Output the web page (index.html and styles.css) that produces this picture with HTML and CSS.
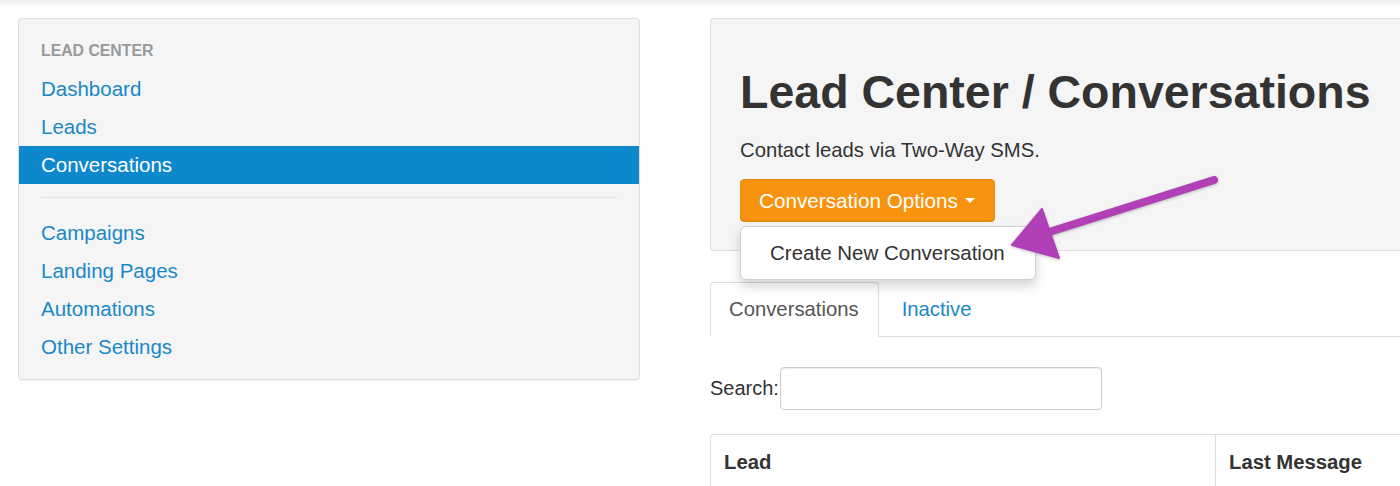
FILE: index.html
```html
<!DOCTYPE html>
<html lang="en">
<head>
<meta charset="utf-8">
<title>Lead Center / Conversations</title>
<link rel="stylesheet" href="styles.css">
</head>
<body>
<div class="topshade"></div>
<div class="page">
  <aside class="sidebar">
    <div class="side-title">LEAD CENTER</div>
    <ul class="side-nav">
      <li><a href="#">Dashboard</a></li>
      <li><a href="#">Leads</a></li>
      <li class="active"><a href="#">Conversations</a></li>
    </ul>
    <div class="side-divider"></div>
    <ul class="side-nav">
      <li><a href="#">Campaigns</a></li>
      <li><a href="#">Landing Pages</a></li>
      <li><a href="#">Automations</a></li>
      <li><a href="#">Other Settings</a></li>
    </ul>
  </aside>
  <main class="main">
    <section class="hero">
      <h1 class="hero-title">Lead Center / Conversations</h1>
      <p class="hero-sub">Contact leads via Two-Way SMS.</p>
      <div class="btn-group">
        <button class="btn-orange" type="button">Conversation Options<span class="caret"></span></button>
        <ul class="dropdown">
          <li><a href="#">Create New Conversation</a></li>
        </ul>
      </div>
    </section>
    <ul class="tabs">
      <li class="tab active"><a href="#">Conversations</a></li>
      <li class="tab"><a href="#">Inactive</a></li>
    </ul>
    <div class="search">
      <label for="q">Search:</label><input id="q" class="search-input" type="text">
    </div>
    <table class="table">
      <thead>
        <tr><th class="col-lead">Lead</th><th class="col-msg">Last Message</th></tr>
      </thead>
      <tbody>
        <tr><td></td><td></td></tr>
      </tbody>
    </table>
  </main>
</div>
<svg class="arrow" width="1400" height="486" viewBox="0 0 1400 486" aria-hidden="true">
  <g class="arrow-shape">
    <line x1="1214" y1="180" x2="1046" y2="233" stroke="#b13fb6" stroke-width="8" stroke-linecap="round"/>
    <polygon points="1012,245 1042,209 1059,258" fill="#b13fb6" stroke="#b13fb6" stroke-width="2" stroke-linejoin="round"/>
  </g>
</svg>
</body>
</html>
```
FILE: styles.css
```css
html, body {
  margin: 0;
  padding: 0;
  background: #ffffff;
  overflow: hidden;
  width: 1400px;
  height: 486px;
}
body {
  font-family: "Liberation Sans", Arial, Helvetica, sans-serif;
  color: #333333;
  position: relative;
}
.topshade {
  position: absolute;
  left: 0;
  top: 0;
  width: 1400px;
  height: 8px;
  background: linear-gradient(#eeeeee, rgba(255,255,255,0));
}
.page {
  display: flex;
  align-items: flex-start;
  padding: 18px 0 0 18px;
  gap: 70px;
  width: 1600px;
}
a { text-decoration: none; }
ul { list-style: none; margin: 0; padding: 0; }

/* Sidebar */
.sidebar {
  width: 620px;
  flex: 0 0 620px;
  background: #f5f5f5;
  border: 1px solid #dddddd;
  border-radius: 4px;
  padding: 21px 0 13px;
  box-shadow: 0 1px 1px rgba(0,0,0,0.04);
}
.side-title {
  font-size: 15.8px;
  font-weight: bold;
  line-height: 22px;
  color: #999999;
  padding: 0 22px;
  margin-bottom: 8px;
}
.side-nav li a {
  display: block;
  line-height: 38px;
  height: 38px;
  padding: 0 22px;
  font-size: 20.5px;
  color: #1a87c9;
}
.side-nav li.active a {
  background: #0e88cc;
  color: #ffffff;
}
.side-divider {
  height: 1px;
  background: #e3e3e3;
  margin: 13px 22px 16px;
}

/* Main */
.main {
  width: 760px;
  flex: 0 0 760px;
}
.hero {
  background: #f5f5f5;
  border: 1px solid #dddddd;
  border-right: none;
  border-radius: 4px 0 0 4px;
  padding: 48px 29px 28px;
}
.hero-title {
  margin: 0;
  font-size: 46.5px;
  line-height: 50px;
  font-weight: bold;
  color: #333333;
}
.hero-sub {
  margin: 19px 0 15px;
  font-size: 20.3px;
  line-height: 28px;
  color: #333333;
}
.btn-group {
  position: relative;
  display: inline-block;
}
.btn-orange {
  display: flex;
  align-items: center;
  height: 43px;
  padding: 0 19px 0 18px;
  background: #f7930f;
  border: 1px solid #e68a0a;
  border-radius: 4px;
  color: #ffffff;
  font-family: "Liberation Sans", Arial, sans-serif;
  font-size: 20.7px;
  box-shadow: inset 0 -1px 0 rgba(0,0,0,0.05);
}
.caret {
  display: inline-block;
  width: 0;
  height: 0;
  margin-left: 7px;
  border-left: 5px solid transparent;
  border-right: 5px solid transparent;
  border-top: 5px solid #ffffff;
}
.dropdown {
  position: absolute;
  left: 0;
  top: 47px;
  width: 294px;
  background: #ffffff;
  border: 1px solid rgba(0,0,0,0.18);
  border-radius: 6px;
  box-shadow: 0 6px 12px rgba(0,0,0,0.175);
  z-index: 5;
}
.dropdown li a {
  display: block;
  height: 52px;
  line-height: 52px;
  padding: 0 29px;
  font-size: 20.5px;
  color: #333333;
}

/* Tabs */
.tabs {
  display: flex;
  margin-top: 31px;
  border-bottom: 1px solid #dddddd;
}
.tab {
  margin-right: 3px;
  margin-bottom: -1px;
}
.tab a {
  display: block;
  padding: 13px 19px 13px 18px;
  line-height: 27px;
  font-size: 20.3px;
  color: #1a87c9;
  border: 1px solid transparent;
  border-radius: 4px 4px 0 0;
}
.tab.active a {
  color: #555555;
  background: #ffffff;
  border-color: #dddddd;
  border-bottom-color: #ffffff;
}
.tab:not(.active) a { padding-left: 19px; }

/* Search */
.search {
  display: flex;
  align-items: center;
  margin-top: 30px;
  font-size: 20px;
  color: #333333;
}
.search-input {
  width: 322px;
  height: 43px;
  box-sizing: border-box;
  margin: 0 0 0 1px;
  border: 1px solid #cccccc;
  border-radius: 4px;
  background: #ffffff;
  box-shadow: inset 0 1px 1px rgba(0,0,0,0.075);
  font-size: 18px;
}

/* Table */
.table {
  margin-top: 24px;
  border-collapse: separate;
  border-spacing: 0;
  width: 760px;
}
.table th {
  text-align: left;
  font-size: 20.3px;
  font-weight: bold;
  line-height: 28px;
  padding: 13px 13px 14px;
  border-top: 1px solid #dddddd;
  border-bottom: 2px solid #dddddd;
  color: #333333;
}
.table td {
  height: 40px;
  border-bottom: 1px solid #dddddd;
}
.table th.col-lead, .table td:first-child {
  width: 478px;
  border-left: 1px solid #dddddd;
  border-right: 1px solid #dddddd;
}
.table th.col-lead { border-top-left-radius: 4px; }

/* Annotation arrow overlay */
.arrow {
  position: absolute;
  left: 0;
  top: 0;
  pointer-events: none;
  z-index: 10;
}
.arrow-shape {
  filter: drop-shadow(0 1px 1.5px rgba(0,0,0,0.25));
}
```
